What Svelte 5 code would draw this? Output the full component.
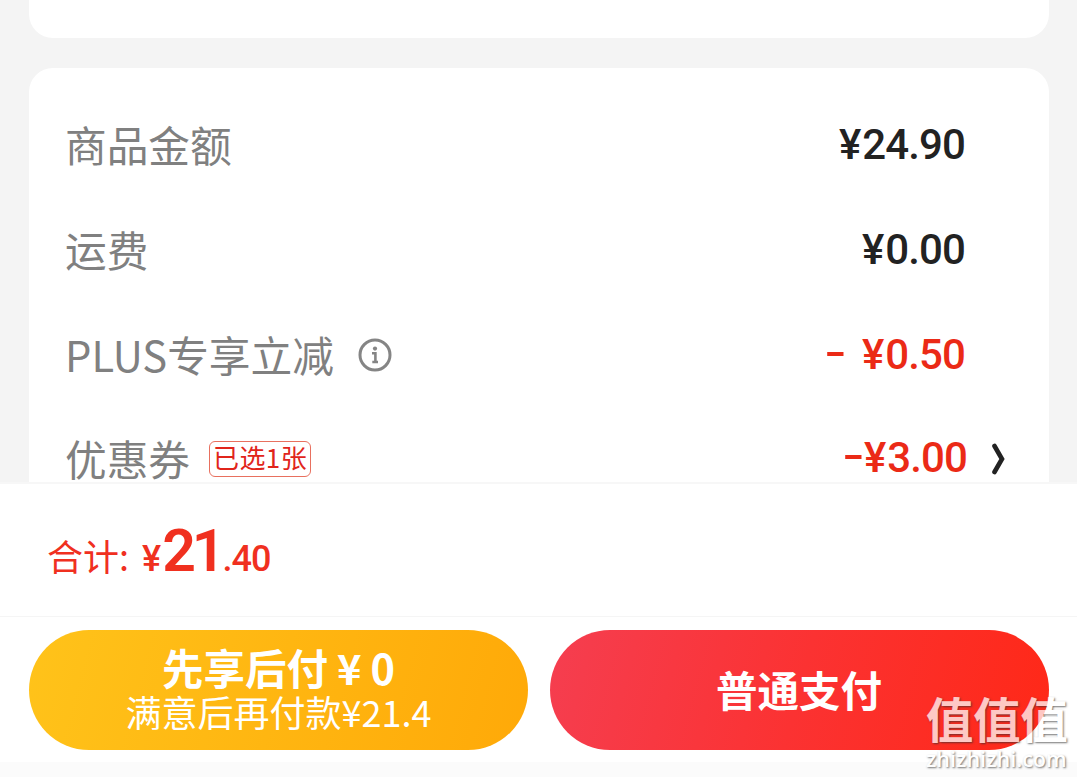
<script lang="ts">
	interface FeeRow {
		label: string;
		sign?: string;
		amount: string;
		info?: boolean;
		tag?: string;
		discount?: boolean;
		link?: boolean;
	}

	const rows: FeeRow[] = [
		{ label: '商品金额', amount: '24.90' },
		{ label: '运费', amount: '0.00' },
		{ label: 'PLUS专享立减', sign: 'spaced', amount: '0.50', info: true, discount: true },
		{ label: '优惠券', sign: 'tight', amount: '3.00', tag: '已选1张', discount: true, link: true }
	];
</script>

<div class="page">
	<main class="content">
		<section class="card previous"></section>
		<section class="card fees">
			{#each rows as row (row.label)}
				<div class="row" class:linked={row.link}>
					<span class="label">{row.label}</span>
					{#if row.info}
						<svg class="info" width="34" height="34" viewBox="0 0 34 34" fill="none">
							<circle cx="17" cy="17" r="15" stroke="#858585" stroke-width="3" />
							<circle cx="17" cy="10.6" r="2.1" fill="#858585" />
							<path d="M14 15.2H17.4V24M14.3 24H20" stroke="#858585" stroke-width="2.6" />
						</svg>
					{/if}
					{#if row.tag}
						<span class="tag">{row.tag}</span>
					{/if}
					<span class="price" class:discount={row.discount}>
						{#if row.sign}<span class="sign {row.sign}">-</span>{/if}<span class="yen">¥</span>{row.amount}
					</span>
					{#if row.link}
						<svg class="arrow" width="14" height="32" viewBox="0 0 14 32" fill="none">
							<path d="M2.5 3L10 16L2.5 29" stroke="#222" stroke-width="4.6" stroke-linecap="round" />
						</svg>
					{/if}
				</div>
			{/each}
		</section>
	</main>

	<footer class="checkout">
		<div class="total">
			<span class="total-label">合计:</span>
			<span class="total-yen">¥</span>
			<span class="total-int">21</span>
			<span class="total-dec">.40</span>
		</div>
		<div class="actions">
			<button class="pay later">
				<span class="main">先享后付<span class="later-yen">¥</span><span class="zero">0</span></span>
				<span class="sub">满意后再付款<span class="sub-price">¥21.4</span></span>
			</button>
			<button class="pay normal">
				<span class="main">普通支付</span>
			</button>
		</div>
		<div class="safe-area"></div>
	</footer>

	<div class="watermark">
		<span class="mark">值值值</span>
		<span class="site">zhizhizhi.com</span>
	</div>
</div>

<style>
	:global(body) {
		overflow: hidden;
	}

	.page {
		position: relative;
		display: flex;
		flex-direction: column;
		width: 1077px;
		height: 777px;
		overflow: hidden;
		background: #f4f4f4;
		font-family: 'Noto Sans CJK SC', sans-serif;
	}

	.content {
		display: flex;
		flex-direction: column;
		gap: 30px;
		height: 482px;
		padding: 0 28px 0 29px;
		overflow: hidden;
		box-sizing: border-box;
	}

	.card {
		flex-shrink: 0;
		background: #fff;
		border-radius: 24px;
	}

	.previous {
		height: 38px;
		border-radius: 0 0 24px 24px;
	}

	.fees {
		height: 460px;
		padding: 26px 84px 0 36px;
		box-sizing: border-box;
	}

	.row {
		display: flex;
		align-items: center;
		height: 105px;
		white-space: nowrap;
	}

	.linked {
		height: 103px;
		margin-right: -41px;
	}

	.label {
		margin-top: -5px;
		color: #808080;
		font-size: 41.7px;
		line-height: 60px;
	}

	.info {
		margin: -4px 0 0 24px;
	}

	.tag {
		margin: -4px 0 0 19px;
		padding: 0 3px 4px;
		border: 1px solid #e8705f;
		border-radius: 6px;
		color: #e1251b;
		font-size: 26px;
		letter-spacing: 0.4px;
		line-height: 30px;
	}

	.price {
		display: flex;
		align-items: center;
		margin: -4px 0 0 auto;
		color: #222;
		font-family: Roboto, 'Noto Sans CJK SC', sans-serif;
		font-size: 42px;
		font-weight: 550;
		letter-spacing: -0.9px;
		line-height: 50px;
	}

	.yen {
		margin-right: 2px;
	}

	.discount {
		color: #eb2a16;
	}

	.sign {
		margin: -3px 5px 0 0;
		transform: scaleX(1.5);
	}

	.spaced {
		margin-right: 21px;
	}

	.linked .price {
		margin-top: -6px;
	}

	.arrow {
		margin: -3px 0 0 25px;
	}

	.checkout {
		display: flex;
		flex-direction: column;
		height: 295px;
		border-top: 2px solid #f7f7f7;
		background: #fff;
		box-sizing: border-box;
	}

	.total {
		display: flex;
		align-items: baseline;
		height: 133px;
		padding: 27px 0 0 47px;
		border-bottom: 1px solid #f5f5f5;
		box-sizing: border-box;
		color: #f0301f;
		font-family: Roboto, sans-serif;
		font-weight: 500;
		line-height: 80px;
	}

	.total-label {
		font-family: 'Noto Sans CJK SC', sans-serif;
		font-size: 36px;
		font-weight: 400;
	}

	.total-yen {
		margin-left: 13px;
		font-size: 36px;
	}

	.total-int {
		margin-left: 1px;
		font-size: 59px;
		font-weight: 650;
		letter-spacing: -4px;
	}

	.total-dec {
		margin-left: 1px;
		font-size: 36px;
		letter-spacing: -1px;
	}

	.actions {
		display: flex;
		gap: 22px;
		padding: 13px 28px 12px 29px;
	}

	.pay {
		flex: 1;
		display: flex;
		flex-direction: column;
		align-items: center;
		justify-content: center;
		height: 120px;
		padding: 0 0 3px;
		border: none;
		border-radius: 60px;
		color: #fff;
		font-family: inherit;
		white-space: nowrap;
	}

	.later {
		background: linear-gradient(105deg, #ffc31a, #ffa908);
	}

	.normal {
		background: linear-gradient(105deg, #f53e50, #fb3232 50%, #ff2817);
	}

	.main {
		font-size: 41.5px;
		font-weight: 700;
		line-height: 46px;
	}

	.normal .main {
		margin-right: 1px;
	}

	.later-yen {
		margin: 0 9px;
	}

	.sub {
		font-size: 36px;
		line-height: 43px;
	}

	.safe-area {
		flex: 1;
		background: #fbfbfb;
	}

	.watermark {
		position: absolute;
		right: 9px;
		bottom: 5px;
		display: flex;
		flex-direction: column;
		width: 142px;
		color: #fff;
		opacity: 0.74;
		text-shadow: 1px 1px 2px rgba(50, 50, 50, 0.9);
		white-space: nowrap;
	}

	.mark {
		font-size: 47.3px;
		font-weight: 700;
		line-height: 54px;
	}

	.site {
		font-family: 'Open Sans', sans-serif;
		font-size: 21.6px;
		font-weight: 600;
		line-height: 27px;
	}
</style>
